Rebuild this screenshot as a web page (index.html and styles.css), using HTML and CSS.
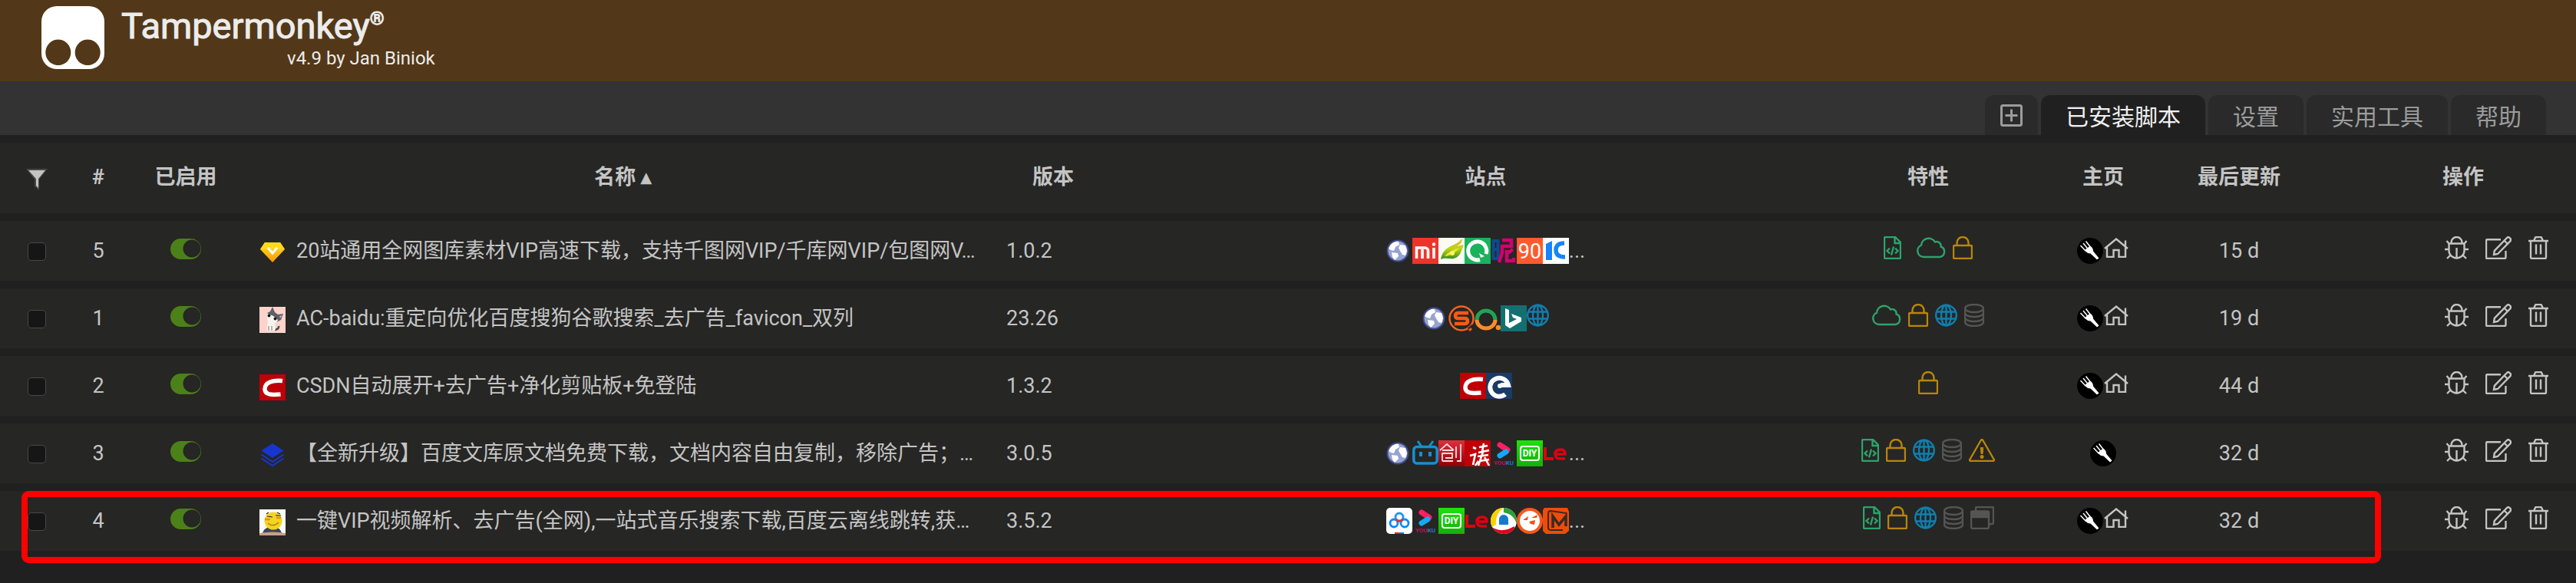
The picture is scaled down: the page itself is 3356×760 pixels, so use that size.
FILE: index.html
```html
<!DOCTYPE html>
<html lang="zh-CN">
<head>
<meta charset="utf-8">
<title>Tampermonkey</title>
<link rel="stylesheet" href="styles.css">
</head>
<body>
<svg class="paints" aria-hidden="true">
  <defs>
    <linearGradient id="gold" x1="0" y1="0" x2="0" y2="1"><stop offset="0" stop-color="#ffe21a"/><stop offset="1" stop-color="#f99a0c"/></linearGradient>
    <linearGradient id="leaf" x1="0" y1="0" x2="0" y2="1"><stop offset="0" stop-color="#f5b52c"/><stop offset=".5" stop-color="#b8d41c"/><stop offset="1" stop-color="#2f8f1c"/></linearGradient>
    <linearGradient id="redshade" x1="0" y1="0" x2="0" y2="1"><stop offset="0" stop-color="#e0303c"/><stop offset="1" stop-color="#8c0008"/></linearGradient>
    <linearGradient id="greenshade" x1="0" y1="0" x2="0" y2="1"><stop offset="0" stop-color="#20e00c"/><stop offset="1" stop-color="#14b00a"/></linearGradient>
    <clipPath id="disc"><circle cx="17" cy="17" r="17"/></clipPath>
  </defs>
</svg>
<svg class="sprite" aria-hidden="true">
  <symbol id="i-file" viewBox="0 0 23 30"><path d="M2.500 1H15l7 7v19.500a1.500 1.500 0 0 1-1.500 1.500h-18A1.500 1.500 0 0 1 1 27.500v-25A1.500 1.500 0 0 1 2.500 1zM14.500 1v8H22M8 15.500 4.500 19 8 22.500M15 15.500l3.500 3.500-3.500 3.500M13 13.500l-3 11"/></symbol>
  <symbol id="i-cloud" viewBox="0 0 38 30"><path d="M9 27a8 8 0 0 1-3-15.300A9.700 9.700 0 0 1 24 7.500a5.500 5.500 0 0 1 7.500 6A7 7 0 0 1 30 27z"/></symbol>
  <symbol id="i-lock" viewBox="0 0 26 30"><rect x="1" y="12" width="24" height="17" rx="1.500"/><path d="M5.500 12V8.500a7.500 7.500 0 0 1 15 0V12"/></symbol>
  <symbol id="i-globe" viewBox="0 0 29 30"><circle cx="14.500" cy="15" r="13.300"/><ellipse cx="14.500" cy="15" rx="6.500" ry="13.300"/><path d="M14.500 1.500v27M2 10.500h25M2 19.500h25"/></symbol>
  <symbol id="i-db" viewBox="0 0 26 30"><ellipse cx="13" cy="6" rx="12" ry="5"/><path d="M1 6v18c0 2.800 5.400 5 12 5s12-2.200 12-5V6M1 12c0 2.800 5.400 5 12 5s12-2.200 12-5M1 18c0 2.800 5.400 5 12 5s12-2.200 12-5"/></symbol>
  <symbol id="i-warn" viewBox="0 0 34 30"><path d="M15.700 2a1.500 1.500 0 0 1 2.600 0l14.400 25a1.300 1.300 0 0 1-1.200 2H2.500a1.300 1.300 0 0 1-1.200-2z"/><path d="M15.300 11.500h3.400l-.7 8h-2z" fill="currentColor" stroke-width="1"/><circle cx="17" cy="23.500" r="1.300" fill="currentColor"/></symbol>
  <symbol id="i-windows" viewBox="0 0 31 30"><rect x="1" y="6.500" width="23" height="22.500" rx="2"/><path d="M1 7.500h23V14H1z" fill="currentColor"/><path d="M7 6.500v-4A1.500 1.500 0 0 1 8.500 1h20A1.500 1.500 0 0 1 30 2.500v19a1.500 1.500 0 0 1-1.500 1.500H24"/></symbol>
  <symbol id="i-house" viewBox="0 0 32 26"><path d="M1 14 16 1.500 31 14M4 12v13h8.500v-9h7v9H28V12M28 3.500V11"/></symbol>
  <symbol id="i-bug" viewBox="0 0 31 30"><path d="M8.500 9V8a7 7 0 0 1 14 0v1M5.500 9.500h20V19a10 9.500 0 0 1-20 0zM15.500 15v13M0 17h5M26 17h5M2.500 6l3 3.500M28.500 6l-3 3.500M3 29l4-4M28 29l-4-4"/></symbol>
  <symbol id="i-edit" viewBox="0 0 34 30"><path d="M20 4.300H2.500A1.500 1.500 0 0 0 1 5.800v21.700A1.500 1.500 0 0 0 2.500 29H25a1.500 1.500 0 0 0 1.500-1.500V19M11 24l.8-5.200L28 2a2.500 2.500 0 0 1 3.500 0l.8.800a2.500 2.500 0 0 1 0 3.500L16 23zM24.500 5.500l4.500 4.500"/></symbol>
  <symbol id="i-trash" viewBox="0 0 26 30"><path d="M0 6h26M7 6l1.800-4a1.500 1.500 0 0 1 1.400-1h5.600a1.500 1.500 0 0 1 1.400 1L19 6M3 6v21.500A1.500 1.500 0 0 0 4.500 29h17a1.500 1.500 0 0 0 1.500-1.500V6M10 10.500v13M16 10.500v13"/></symbol>

  <symbol id="s-earth" viewBox="0 0 34 34"><circle cx="15" cy="17" r="14.500" fill="#3f4a8c"/><circle cx="15" cy="17" r="12.500" fill="#97a3cf"/><path d="M5 10c3-4 8-6 11-5l1 4-5 3-2 5-4-1-3-2zM18 9l7 1 2 7-2 6-4-1-3-5-2-4zM7 19l8 1 1 4-5 5-3-4z" fill="#fff"/></symbol>
  <symbol id="s-mi" viewBox="0 0 34 34"><path fill="#ee342a" d="M0 0h34v34H0z"/><path d="M5.500 27V13h11a4 4 0 0 1 4 4v10M13 15v12M28 13v14" fill="none" stroke="#fff" stroke-width="3.600"/><circle cx="28" cy="8.500" r="2.200" fill="#fff"/></symbol>
  <symbol id="s-leaf" viewBox="0 0 34 34"><path fill="#fbfbf4" d="M0 0h34v34H0z"/><path d="M3 28C6 14 14 12 20 9s8-5 11-8c0 5-3 8-7 10l9-2c-3 7-4 16-13 18-6 1-11-2-17 1z" fill="url(#leaf)"/><path d="M8 24c4-5 11-8 19-11-4 6-10 10-19 11z" fill="#f6e526"/><circle cx="18" cy="20" r="3" fill="#fff36a"/></symbol>
  <symbol id="s-ring" viewBox="0 0 34 34"><path fill="#19b35b" d="M0 0h34v34H0z"/><path d="M20 28.500A12 12 0 1 1 28 21" fill="none" stroke="#fff" stroke-width="5"/><path d="m19 20 7 4-5 2z" fill="#fff"/></symbol>
  <symbol id="s-ni" viewBox="0 0 34 34"><path d="M3.500 4h6v23h-6zM3.500 15h6" fill="none" stroke="#0d4a8f" stroke-width="4"/><path d="M15 3h12v8H15v8l-4 13M21 16v14h9v-4M29 15l-8 6" fill="none" stroke="#d2006e" stroke-width="4.500"/></symbol>
  <symbol id="s-90" viewBox="0 0 34 34"><path fill="#ff5a2c" d="M0 0h34v34H0z"/><text class="mark mark-90" x="17" y="27">90</text></symbol>
  <symbol id="s-k" viewBox="0 0 34 34"><path fill="#fff" d="M0 0h34v34H0z"/><path d="m4 8 8-4v25H4z" fill="#1684fb"/><path d="M28 7q-11 0-11 9t12 9" fill="none" stroke="#1684fb" stroke-width="5.500"/></symbol>
  <symbol id="s-sogou" viewBox="0 0 34 34"><circle cx="17" cy="17" r="15.500" fill="none" stroke="#f26322" stroke-width="2.500"/><path d="M26 10H13q-4 0-4 3.500t4 3.500h8q4 0 4 3.500T21 24H8" fill="none" stroke="#fb5a14" stroke-width="4.500"/><path d="m26 31 6-5" stroke="#262624" stroke-width="3"/><path d="m27 33 3-3" stroke="#fb5a14" stroke-width="3"/></symbol>
  <symbol id="s-so" viewBox="0 0 34 34"><path d="M3 19a12 12 0 1 1 24 0" fill="none" stroke="#21a452" stroke-width="5"/><path d="M3 19a12 11 0 0 0 24 0" fill="none" stroke="#fb8c27" stroke-width="5"/><circle cx="31" cy="29" r="3.300" fill="#fb8c27"/></symbol>
  <symbol id="s-bing" viewBox="0 0 34 34"><path fill="#137070" d="M0 0h34v34H0z"/><path d="m6 4 5 2v17l10-5-5-2-2-5 13 5v5L12 30l-6-4z" fill="#fff"/></symbol>
  <symbol id="s-csdn" viewBox="0 0 34 34"><path fill="#bf0007" d="M0 0h34v34H0z"/><path d="M30 8.500C16 7 7 11 7 19c0 8 9 8 20.500 7" fill="none" stroke="#fff" stroke-width="5.500"/></symbol>
  <symbol id="s-e" viewBox="0 0 34 34"><path fill="#193b66" d="M0 0h34v34H0z"/><path d="M25 28A12 12 0 1 1 29 16H19" fill="none" stroke="#fff" stroke-width="6"/><circle cx="18" cy="17" r="3" fill="#fff"/></symbol>
  <symbol id="s-bili" viewBox="0 0 34 34"><path d="m7 1 5 7M27 1l-5 7" stroke="#1690cf" stroke-width="3"/><rect x="1.800" y="8.500" width="30.400" height="21.500" rx="4" fill="none" stroke="#1690cf" stroke-width="3.500"/><path d="M9 15h4v6H9zM21 15h4v6h-4z" fill="#1690cf"/></symbol>
  <symbol id="s-chuang" viewBox="0 0 34 34"><path fill="url(#redshade)" d="M0 0h34v34H0z"/><path d="M2 13 11 5l9 8M5 13h14M5 27V17h13v6H9M5 27h14M23 8v15M29 5v22h-5" fill="none" stroke="#f6dcdc" stroke-width="1.800"/></symbol>
  <symbol id="s-du" viewBox="0 0 34 34"><path fill="#c00008" d="M0 0h34v34H0z"/><path d="m11 9 4 2M7 20l7-2-3 14M19 9l11-2M25 4l-2 11M18 16l14-3M17 21l14-2M24 15l-6 18M26 22l6 11M20 27l12-2M14 33l4-6" fill="none" stroke="#fff" stroke-width="2.600"/></symbol>
  <symbol id="s-youku" viewBox="0 0 34 34"><path d="m12 6 10 6.500" stroke="#ff1f62" stroke-width="7" stroke-linecap="round"/><path d="m12 20 8-5" stroke="#16a8f6" stroke-width="7" stroke-linecap="round"/><text class="mark mark-youku" x="17" y="32"><tspan fill="#c01058">YOU</tspan><tspan fill="#1b7cc4">KU</tspan></text></symbol>
  <symbol id="s-diy" viewBox="0 0 34 34"><path fill="url(#greenshade)" d="M0 0h34v34H0z"/><rect x="5" y="8" width="24" height="18" rx="3" fill="none" stroke="#fff" stroke-width="2"/><text class="mark mark-diy" x="17" y="21">DIY</text></symbol>
  <symbol id="s-le" viewBox="0 0 34 34"><path d="M3 9v15h11" fill="none" stroke="#e00012" stroke-width="4"/><path d="M17 18h12q0-6-6-6-7 0-7 6 0 6 7 6h6" fill="none" stroke="#e00012" stroke-width="3.500"/></symbol>
  <symbol id="s-pan" viewBox="0 0 34 34"><rect width="34" height="34" rx="5" fill="#fff"/><circle cx="10" cy="20" r="5" fill="none" stroke="#0b8cf5" stroke-width="2.800"/><circle cx="24" cy="20" r="5" fill="none" stroke="#0b8cf5" stroke-width="2.800"/><circle cx="17" cy="12" r="5" fill="none" stroke="#1998f6" stroke-width="2.800"/><path d="M12.500 14.500a5 5 0 0 0 9 0" fill="none" stroke="#e8303e" stroke-width="2.800"/><path d="M11 32h6v2h-6z" fill="#e8202e"/><path d="M17 32h6v2h-6z" fill="#1a6ff0"/></symbol>
  <symbol id="s-browser" viewBox="0 0 34 34"><g clip-path="url(#disc)"><path fill="#fff" d="M0 0h34v34H0z"/><path d="M0 0h17c-7 5-11 12-10 22L0 26z" fill="#ffd000"/><path d="M17 0h17v22c-2-9-7-14-17-16z" fill="#28a336"/><path d="M3 26c8 4 16 5 28-2v10H3z" fill="#e3001b"/></g><path d="M11 22V15a6 6 0 0 1 12 0v7z" fill="#1679cc"/></symbol>
  <symbol id="s-face" viewBox="0 0 34 34"><circle cx="17" cy="17" r="15" fill="#fff" stroke="#f4591c" stroke-width="4"/><path d="m8 16 7-5-1 5zM19 13l8-4-1 4zM16 18l8-2-1 6-5-1z" fill="#f0501a"/></symbol>
  <symbol id="s-mango" viewBox="0 0 34 34"><path d="M2 0h30l2 5v25l-5 4H4l-4-4V3z" fill="#ee4c0b"/><path d="M31 7 10 4Q7 4 7 8v18q0 3 4 3h15" fill="none" stroke="#3a2a22" stroke-width="2"/><path d="M13 26V11l8 11 9-11v13" fill="none" stroke="#3a2a22" stroke-width="3.500"/></symbol>
  <symbol id="s-fork" viewBox="0 0 34 34"><circle cx="17" cy="17" r="17"/><path d="m4.500 10 7 7.500M8 7l6.500 8M11.500 4.500 18 13" stroke="#fff" stroke-width="1.500" fill="none"/><path d="M10 16c3 4 5 4.500 7.500 4.500l8.500 8 2.500-2-7.500-9c0-3-1-5-4-7z" fill="#fff"/></symbol>
  <symbol id="s-diamond" viewBox="0 0 34 34"><path d="M7 4h20l6 9-16 17L1 13z" fill="url(#gold)"/><path d="M7 4h20l6 9H1z" fill="#ffd91a"/><path d="m11 11 6 7 6-7" fill="none" stroke="#fff" stroke-width="3.200"/></symbol>
  <symbol id="s-cat" viewBox="0 0 34 34"><path fill="#fbd3ca" d="M0 0h34v34H0z"/><path d="M20 30q6-1 5-5" fill="none" stroke="#494a4c" stroke-width="2.500"/><path d="m10 8 4-2 3-6 3 7 4 3 7-1-3 8-6 3-6-8z" fill="#5d6165"/><path d="M26 12l4-1-3 4z" fill="#e7a0a8"/><path d="M10 10q7-1 14 7-1 4-4 4l1 9q-6 3-12 1l2-12q-2-4-1-9z" fill="#f6f3ee"/><circle cx="12.500" cy="11.500" r="1.900" fill="#161616"/><circle cx="20.500" cy="15.500" r="1.900" fill="#161616"/><path d="M12 25v6M16 25v6" stroke="#777" stroke-width="1"/></symbol>
  <symbol id="s-layers" viewBox="0 0 34 34"><path d="M17 2 31.500 11.500 17 21 2.500 11.500z" fill="#1636cf"/><path d="M2.500 16.500 17 26l14.500-9.500M2.500 21.500 17 31l14.500-9.500" fill="none" stroke="#1636cf" stroke-width="2"/></symbol>
  <symbol id="s-emoji" viewBox="0 0 34 34"><path fill="#fbfbf8" d="M0 0h34v34H0z"/><path d="M4 32c1-7 6-9 13-9s10 2 12 8z" fill="#3e4658"/><path d="M0 31q17-3 34 0v3H0z" fill="#c8a087"/><circle cx="18" cy="15" r="11.500" fill="#f3d51e"/><path d="m9 6 3-2M23 4l4 2M10 9l7 1M21 8h7" stroke="#222" stroke-width="1.200"/><path d="M7 13h7M22 11h6" stroke="#f08c28" stroke-width="2.500"/><path d="M11 18q7 6 14-1" fill="none" stroke="#b08418" stroke-width="1.500"/></symbol>
</svg>

<header class="banner">
  <svg class="logo" viewBox="0 0 82 82" aria-label="logo"><path fill-rule="evenodd" fill="#fff" d="M20 0h42a20 20 0 0 1 20 20v42a20 20 0 0 1-20 20H20A20 20 0 0 1 0 62V20A20 20 0 0 1 20 0zM21.800 43.500a16.500 16.800 0 1 0 .01 0zM60.200 43.500a16.500 16.800 0 1 0 .01 0z"/></svg>
  <div class="titles">
    <h1 class="title">Tampermonkey<span class="reg">®</span></h1>
    <p class="byline">v4.9 by Jan Biniok</p>
  </div>
</header>

<nav class="tabs">
  <a class="tab tab-add" href="#new" aria-label="添加新脚本"><svg class="plus" viewBox="0 0 29 29"><rect x="1.500" y="1.500" width="26" height="26" rx="2"/><path d="M14.500 6.500v16M6.500 14.500h16"/></svg></a>
  <a class="tab tab-on" href="#installed">已安装脚本</a>
  <a class="tab" href="#settings">设置</a>
  <a class="tab" href="#utils">实用工具</a>
  <a class="tab" href="#help">帮助</a>
</nav>

<main class="panel">
<table class="scripts">
  <colgroup><col class="w-check"><col class="w-num"><col class="w-on"><col><col class="w-ver"><col><col class="w-feat"><col class="w-home"><col class="w-date"><col class="w-act"></colgroup>
  <thead>
    <tr>
      <th><svg class="filter" viewBox="0 0 28 28"><path d="M0 0h28L17 14v14l-6-5v-9z" fill="#484846"/><path d="M3 2h22l-9 11v12l-3-3v-9z" fill="#c4c4c4"/></svg></th>
      <th>#</th><th>已启用</th><th class="name">名称 ▴</th><th class="ver">版本</th><th class="site">站点</th><th>特性</th><th>主页</th><th>最后更新</th><th class="act">操作</th>
    </tr>
  </thead>
  <tbody>
    <tr>
      <td><input class="check" type="checkbox" aria-label="选择 5"></td>
      <td>5</td>
      <td class="raised"><input class="toggle" type="checkbox" checked aria-label="启用 5"></td>
      <td class="name"><div class="label"><svg class="fav"><use href="#s-diamond"/></svg><span class="text">20站通用全网图库素材VIP高速下载，支持千图网VIP/千库网VIP/包图网V…</span></div></td>
      <td class="ver">1.0.2</td>
      <td class="site"><div class="sites"><svg class="fav"><use href="#s-earth"/></svg><svg class="fav"><use href="#s-mi"/></svg><svg class="fav"><use href="#s-leaf"/></svg><svg class="fav"><use href="#s-ring"/></svg><svg class="fav"><use href="#s-ni"/></svg><svg class="fav"><use href="#s-90"/></svg><svg class="fav"><use href="#s-k"/></svg><span>...</span></div></td>
      <td class="raised"><div class="feats"><svg class="ic file"><use href="#i-file"/></svg><span class="blank"></span><svg class="ic cloud"><use href="#i-cloud"/></svg><svg class="ic lock"><use href="#i-lock"/></svg></div></td>
      <td><div class="homes"><svg class="fav"><use href="#s-fork"/></svg><svg class="ic house"><use href="#i-house"/></svg></div></td>
      <td>15 d</td>
      <td class="act raised"><div class="actions"><button class="btn" aria-label="调试"><svg class="ic bug"><use href="#i-bug"/></svg></button><button class="btn" aria-label="编辑"><svg class="ic edit"><use href="#i-edit"/></svg></button><button class="btn" aria-label="删除"><svg class="ic trash"><use href="#i-trash"/></svg></button></div></td>
    </tr>
    <tr>
      <td><input class="check" type="checkbox" aria-label="选择 1"></td>
      <td>1</td>
      <td class="raised"><input class="toggle" type="checkbox" checked aria-label="启用 1"></td>
      <td class="name"><div class="label"><svg class="fav"><use href="#s-cat"/></svg><span class="text">AC-baidu:重定向优化百度搜狗谷歌搜索_去广告_favicon_双列</span></div></td>
      <td class="ver">23.26</td>
      <td class="site"><div class="sites"><svg class="fav"><use href="#s-earth"/></svg><svg class="fav"><use href="#s-sogou"/></svg><svg class="fav"><use href="#s-so"/></svg><svg class="fav"><use href="#s-bing"/></svg><svg class="ic globe lifted"><use href="#i-globe"/></svg></div></td>
      <td class="raised"><div class="feats"><svg class="ic cloud"><use href="#i-cloud"/></svg><svg class="ic lock"><use href="#i-lock"/></svg><svg class="ic globe"><use href="#i-globe"/></svg><svg class="ic db"><use href="#i-db"/></svg></div></td>
      <td><div class="homes"><svg class="fav"><use href="#s-fork"/></svg><svg class="ic house"><use href="#i-house"/></svg></div></td>
      <td>19 d</td>
      <td class="act raised"><div class="actions"><button class="btn" aria-label="调试"><svg class="ic bug"><use href="#i-bug"/></svg></button><button class="btn" aria-label="编辑"><svg class="ic edit"><use href="#i-edit"/></svg></button><button class="btn" aria-label="删除"><svg class="ic trash"><use href="#i-trash"/></svg></button></div></td>
    </tr>
    <tr>
      <td><input class="check" type="checkbox" aria-label="选择 2"></td>
      <td>2</td>
      <td class="raised"><input class="toggle" type="checkbox" checked aria-label="启用 2"></td>
      <td class="name"><div class="label"><svg class="fav"><use href="#s-csdn"/></svg><span class="text">CSDN自动展开+去广告+净化剪贴板+免登陆</span></div></td>
      <td class="ver">1.3.2</td>
      <td class="site"><div class="sites"><svg class="fav"><use href="#s-csdn"/></svg><svg class="fav"><use href="#s-e"/></svg></div></td>
      <td class="raised"><div class="feats"><svg class="ic lock"><use href="#i-lock"/></svg></div></td>
      <td><div class="homes"><svg class="fav"><use href="#s-fork"/></svg><svg class="ic house"><use href="#i-house"/></svg></div></td>
      <td>44 d</td>
      <td class="act raised"><div class="actions"><button class="btn" aria-label="调试"><svg class="ic bug"><use href="#i-bug"/></svg></button><button class="btn" aria-label="编辑"><svg class="ic edit"><use href="#i-edit"/></svg></button><button class="btn" aria-label="删除"><svg class="ic trash"><use href="#i-trash"/></svg></button></div></td>
    </tr>
    <tr>
      <td><input class="check" type="checkbox" aria-label="选择 3"></td>
      <td>3</td>
      <td class="raised"><input class="toggle" type="checkbox" checked aria-label="启用 3"></td>
      <td class="name"><div class="label"><svg class="fav"><use href="#s-layers"/></svg><span class="text">【全新升级】百度文库原文档免费下载，文档内容自由复制，移除广告；…</span></div></td>
      <td class="ver">3.0.5</td>
      <td class="site"><div class="sites"><svg class="fav"><use href="#s-earth"/></svg><svg class="fav"><use href="#s-bili"/></svg><svg class="fav"><use href="#s-chuang"/></svg><svg class="fav"><use href="#s-du"/></svg><svg class="fav"><use href="#s-youku"/></svg><svg class="fav"><use href="#s-diy"/></svg><svg class="fav"><use href="#s-le"/></svg><span>...</span></div></td>
      <td class="raised"><div class="feats"><svg class="ic file"><use href="#i-file"/></svg><svg class="ic lock"><use href="#i-lock"/></svg><svg class="ic globe"><use href="#i-globe"/></svg><svg class="ic db"><use href="#i-db"/></svg><svg class="ic warn"><use href="#i-warn"/></svg></div></td>
      <td><div class="homes"><svg class="fav"><use href="#s-fork"/></svg></div></td>
      <td>32 d</td>
      <td class="act raised"><div class="actions"><button class="btn" aria-label="调试"><svg class="ic bug"><use href="#i-bug"/></svg></button><button class="btn" aria-label="编辑"><svg class="ic edit"><use href="#i-edit"/></svg></button><button class="btn" aria-label="删除"><svg class="ic trash"><use href="#i-trash"/></svg></button></div></td>
    </tr>
    <tr>
      <td><input class="check" type="checkbox" aria-label="选择 4"></td>
      <td>4</td>
      <td class="raised"><input class="toggle" type="checkbox" checked aria-label="启用 4"></td>
      <td class="name"><div class="label"><svg class="fav"><use href="#s-emoji"/></svg><span class="text">一键VIP视频解析、去广告(全网),一站式音乐搜索下载,百度云离线跳转,获…</span></div></td>
      <td class="ver">3.5.2</td>
      <td class="site"><div class="sites"><svg class="fav"><use href="#s-pan"/></svg><svg class="fav"><use href="#s-youku"/></svg><svg class="fav"><use href="#s-diy"/></svg><svg class="fav"><use href="#s-le"/></svg><svg class="fav"><use href="#s-browser"/></svg><svg class="fav"><use href="#s-face"/></svg><svg class="fav"><use href="#s-mango"/></svg><span>...</span></div></td>
      <td class="raised"><div class="feats"><svg class="ic file"><use href="#i-file"/></svg><svg class="ic lock"><use href="#i-lock"/></svg><svg class="ic globe"><use href="#i-globe"/></svg><svg class="ic db"><use href="#i-db"/></svg><svg class="ic windows"><use href="#i-windows"/></svg></div></td>
      <td><div class="homes"><svg class="fav"><use href="#s-fork"/></svg><svg class="ic house"><use href="#i-house"/></svg></div></td>
      <td>32 d</td>
      <td class="act raised"><div class="actions"><button class="btn" aria-label="调试"><svg class="ic bug"><use href="#i-bug"/></svg></button><button class="btn" aria-label="编辑"><svg class="ic edit"><use href="#i-edit"/></svg></button><button class="btn" aria-label="删除"><svg class="ic trash"><use href="#i-trash"/></svg></button></div></td>
    </tr>
  </tbody>
</table>
<div class="highlight"></div>
</main>
</body>
</html>
```
FILE: styles.css
```css
* { box-sizing: border-box; }

body {
  margin: 0;
  min-height: 100vh;
  background: #202020;
  color: #c4c4c4;
  font: 27px/32px Roboto, "Noto Sans CJK SC", sans-serif;
}

.paints { position: absolute; width: 0; height: 0; }
.sprite { display: none; }

/* Banner */
.banner {
  display: flex;
  gap: 22px;
  height: 106px;
  padding: 8px 54px;
  background: #523818;
  color: #ececec;
}
.logo { width: 82px; height: 82px; flex: none; }
.titles { display: flex; flex-direction: column; }
.title {
  display: flex;
  align-items: flex-start;
  margin: 0;
  font-size: 47px;
  line-height: 52px;
  font-weight: 400;
  -webkit-text-stroke: 1px #ececec;
}
.reg { font-size: 24px; line-height: 32px; }
.byline {
  margin: 0;
  padding-left: 216px;
  font-size: 24px;
  line-height: 32px;
}

/* Tabs */
.tabs {
  display: flex;
  justify-content: flex-end;
  align-items: flex-end;
  gap: 4px;
  height: 70px;
  padding-right: 39px;
  background: #333;
}
.tab {
  display: flex;
  align-items: center;
  justify-content: center;
  height: 52px;
  padding: 6px 32px 0;
  border-radius: 12px 12px 0 0;
  background: #2a2a2a;
  color: #9c9c9c;
  font-size: 30px;
  text-decoration: none;
}
.tab-on { background: #202020; color: #f0f0f0; }
.tab-add { padding: 0 20px; }
.plus { width: 29px; height: 29px; fill: none; stroke: #9c9c9c; stroke-width: 3; }

/* Script list */
.panel { position: relative; }
.scripts {
  width: 100%;
  table-layout: fixed;
  border-collapse: separate;
  border-spacing: 0 10px;
}
.w-check { width: 96px; }
.w-num { width: 64px; }
.w-on { width: 164px; }
.w-ver { width: 142px; }
.w-feat { width: 224px; }
.w-home { width: 232px; }
.w-date { width: 122px; }
.w-act { width: 378px; }

th, td {
  height: 78px;
  padding: 0;
  background: #262624;
  text-align: center;
  vertical-align: middle;
  white-space: nowrap;
}
th { height: 92px; padding-bottom: 2px; font-weight: 700; }
.name { padding-left: 14px; padding-right: 6px; }
.ver { padding-left: 20px; }
td.ver { text-align: left; }
.site { padding-left: 38px; }
.act { padding-left: 204px; text-align: left; }
td.act { padding-left: 207px; }
.raised { padding-bottom: 8px; }

.filter { display: block; width: 28px; height: 28px; margin: 6px auto 0; }
.check {
  appearance: none;
  display: block;
  width: 24px;
  height: 24px;
  margin: 2px auto 0;
  border: 1px solid #484848;
  border-radius: 5px;
  background: #161616;
}
.toggle {
  appearance: none;
  display: block;
  width: 40px;
  height: 27px;
  margin: 3px auto 0;
  border-radius: 14px;
  background: radial-gradient(circle at 28px 13px, #262624 11px, #4c8019 12px);
}

.label { display: flex; align-items: center; gap: 14px; }
.label .fav { margin-top: 3px; }
.fav { width: 34px; height: 34px; flex: none; }
.text { overflow: hidden; text-overflow: ellipsis; }
.sites, .feats, .homes { display: flex; align-items: center; justify-content: center; }
.feats { gap: 9px; }
.blank { width: 2px; }
.actions { display: flex; align-items: center; gap: 22px; }
.btn { display: block; padding: 0; border: 0; background: none; color: #c4c4c4; }

.ic { display: block; flex: none; height: 30px; fill: none; stroke: currentColor; stroke-width: 2.4; }
.file { width: 23px; color: #2da36d; }
.cloud { width: 38px; color: #2da36d; }
.lock { width: 26px; color: #b8860b; }
.globe { width: 29px; color: #0f7fae; }
.db { width: 26px; color: #555; }
.warn { width: 34px; color: #b8860b; }
.windows { width: 31px; color: #555; }
.house { width: 32px; height: 26px; margin: 0 1px 8px; }
.lifted { margin-bottom: 8px; }
.bug { width: 31px; }
.edit { width: 34px; }
.trash { width: 26px; }

.mark { fill: #fff; font-family: Roboto, sans-serif; text-anchor: middle; }
.mark-90 { font-size: 27px; }
.mark-youku { font-size: 8px; font-weight: 700; }
.mark-diy { font-size: 12px; font-weight: 700; }

/* Frame drawn over the last row */
.highlight {
  position: absolute;
  left: 28px;
  right: 254px;
  bottom: -6px;
  height: 94px;
  border: 8px solid #f00;
  border-radius: 9px;
  pointer-events: none;
}
```
